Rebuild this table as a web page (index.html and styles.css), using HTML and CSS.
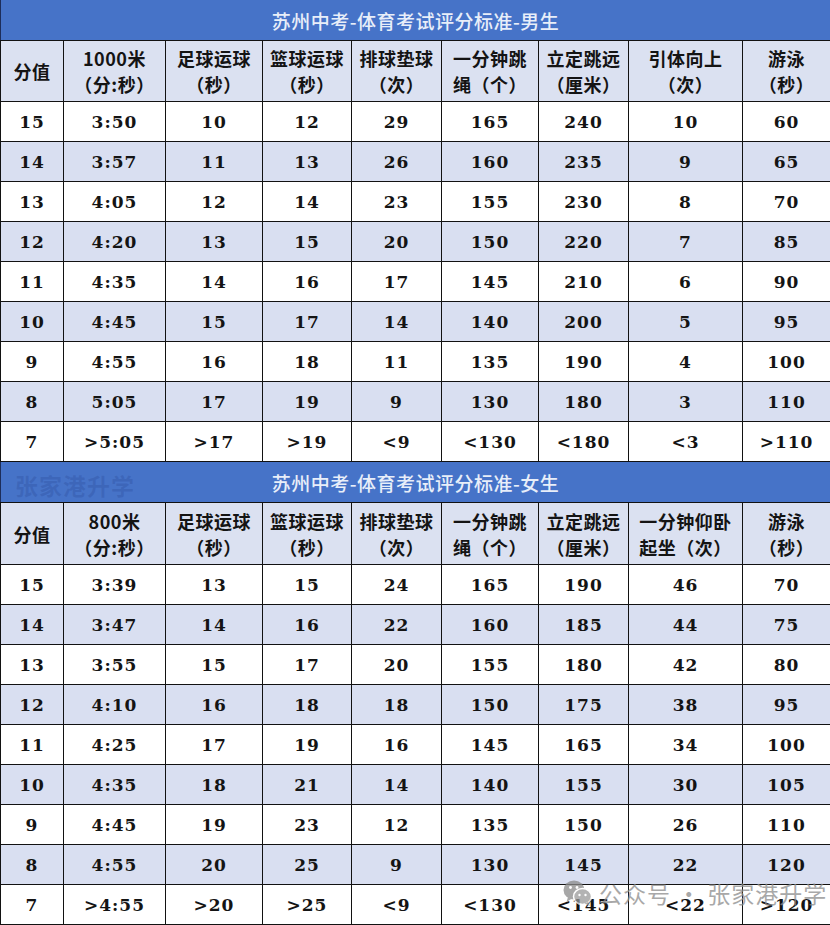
FILE: index.html
```html
<!DOCTYPE html>
<html lang="zh">
<head>
<meta charset="utf-8">
<link rel="stylesheet" href="styles.css">
</head>
<body>
<div class="page">
<table class="score">
<colgroup>
<col class="c1"><col class="c2"><col class="c3"><col class="c4"><col class="c5"><col class="c6"><col class="c7"><col class="c8"><col class="c9">
</colgroup>
<tr class="title"><td colspan="9">苏州中考-体育考试评分标准-男生</td></tr>
<tr class="head">
<td>分值</td><td>1000米<br>（分:秒）</td><td>足球运球<br>（秒）</td><td>篮球运球<br>（秒）</td><td>排球垫球<br>（次）</td><td>一分钟跳<br>绳（个）</td><td>立定跳远<br>（厘米）</td><td>引体向上<br>（次）</td><td>游泳<br>（秒）</td>
</tr>
<tr><td>15</td><td>3:50</td><td>10</td><td>12</td><td>29</td><td>165</td><td>240</td><td>10</td><td>60</td></tr>
<tr class="alt"><td>14</td><td>3:57</td><td>11</td><td>13</td><td>26</td><td>160</td><td>235</td><td>9</td><td>65</td></tr>
<tr><td>13</td><td>4:05</td><td>12</td><td>14</td><td>23</td><td>155</td><td>230</td><td>8</td><td>70</td></tr>
<tr class="alt"><td>12</td><td>4:20</td><td>13</td><td>15</td><td>20</td><td>150</td><td>220</td><td>7</td><td>85</td></tr>
<tr><td>11</td><td>4:35</td><td>14</td><td>16</td><td>17</td><td>145</td><td>210</td><td>6</td><td>90</td></tr>
<tr class="alt"><td>10</td><td>4:45</td><td>15</td><td>17</td><td>14</td><td>140</td><td>200</td><td>5</td><td>95</td></tr>
<tr><td>9</td><td>4:55</td><td>16</td><td>18</td><td>11</td><td>135</td><td>190</td><td>4</td><td>100</td></tr>
<tr class="alt"><td>8</td><td>5:05</td><td>17</td><td>19</td><td>9</td><td>130</td><td>180</td><td>3</td><td>110</td></tr>
<tr><td>7</td><td>&gt;5:05</td><td>&gt;17</td><td>&gt;19</td><td>&lt;9</td><td>&lt;130</td><td>&lt;180</td><td>&lt;3</td><td>&gt;110</td></tr>
</table>

<table class="score second">
<colgroup>
<col class="c1"><col class="c2"><col class="c3"><col class="c4"><col class="c5"><col class="c6"><col class="c7"><col class="c8"><col class="c9">
</colgroup>
<tr class="title"><td colspan="9"><span class="wm-title">张家港升学</span>苏州中考-体育考试评分标准-女生</td></tr>
<tr class="head">
<td>分值</td><td>800米<br>（分:秒）</td><td>足球运球<br>（秒）</td><td>篮球运球<br>（秒）</td><td>排球垫球<br>（次）</td><td>一分钟跳<br>绳（个）</td><td>立定跳远<br>（厘米）</td><td>一分钟仰卧<br>起坐（次）</td><td>游泳<br>（秒）</td>
</tr>
<tr><td>15</td><td>3:39</td><td>13</td><td>15</td><td>24</td><td>165</td><td>190</td><td>46</td><td>70</td></tr>
<tr class="alt"><td>14</td><td>3:47</td><td>14</td><td>16</td><td>22</td><td>160</td><td>185</td><td>44</td><td>75</td></tr>
<tr><td>13</td><td>3:55</td><td>15</td><td>17</td><td>20</td><td>155</td><td>180</td><td>42</td><td>80</td></tr>
<tr class="alt"><td>12</td><td>4:10</td><td>16</td><td>18</td><td>18</td><td>150</td><td>175</td><td>38</td><td>95</td></tr>
<tr><td>11</td><td>4:25</td><td>17</td><td>19</td><td>16</td><td>145</td><td>165</td><td>34</td><td>100</td></tr>
<tr class="alt"><td>10</td><td>4:35</td><td>18</td><td>21</td><td>14</td><td>140</td><td>155</td><td>30</td><td>105</td></tr>
<tr><td>9</td><td>4:45</td><td>19</td><td>23</td><td>12</td><td>135</td><td>150</td><td>26</td><td>110</td></tr>
<tr class="alt"><td>8</td><td>4:55</td><td>20</td><td>25</td><td>9</td><td>130</td><td>145</td><td>22</td><td>120</td></tr>
<tr><td>7</td><td>&gt;4:55</td><td>&gt;20</td><td>&gt;25</td><td>&lt;9</td><td>&lt;130</td><td>&lt;145</td><td>&lt;22</td><td>&gt;120</td></tr>
</table>

<div class="wm-bottom">
<svg class="wx" width="30" height="28" viewBox="0 0 30 28">
<ellipse cx="11" cy="11" rx="10.5" ry="9.5" fill="#8a8a8a"/>
<path d="M5 18 L3.5 23 L9 19.5 Z" fill="#8a8a8a"/>
<ellipse cx="19.5" cy="17.5" rx="9" ry="8" fill="#9a9a9a" stroke="#fff" stroke-width="1.5"/>
<path d="M25 23 L27 27 L21.5 24.5 Z" fill="#9a9a9a"/>
<circle cx="7.5" cy="8.5" r="1.4" fill="#fff"/>
<circle cx="14" cy="8.5" r="1.4" fill="#fff"/>
<circle cx="16.5" cy="16" r="1.2" fill="#fff"/>
<circle cx="22.5" cy="16" r="1.2" fill="#fff"/>
</svg>
<span class="wm-text">公众号 · 张家港升学</span>
</div>
</div>
</body>
</html>
```

FILE: styles.css
```css
html, body {
  margin: 0;
  padding: 0;
  background: #ffffff;
}

.page {
  position: relative;
  width: 830px;
}

.score {
  width: 830px;
  table-layout: fixed;
  border-collapse: collapse;
  font-family: "DejaVu Serif", "Noto Sans CJK SC", serif;
  font-weight: 700;
  color: #141414;
}

.c1 { width: 63px; }
.c2 { width: 102px; }
.c3 { width: 97px; }
.c4 { width: 89px; }
.c5 { width: 90px; }
.c6 { width: 97px; }
.c7 { width: 90px; }
.c8 { width: 114px; }
.c9 { width: 88px; }

.score td {
  border: 1.5px solid #121212;
  padding: 0;
  text-align: center;
  vertical-align: middle;
  font-size: 17px;
  letter-spacing: 1px;
  height: 39px;
  white-space: nowrap;
}

.score tr.alt td {
  background: #d9dff1;
}

.score tr.title td {
  position: relative;
  background: #4673c8;
  color: #e8eef9;
  font-family: "Noto Sans CJK SC", sans-serif;
  font-weight: 500;
  font-size: 19px;
  letter-spacing: 0.5px;
  height: 40px;
  border-left: 1px solid #1d2d5a;
  border-right: 1px solid #1d2d5a;
  border-top: 0;
}

.score tr.head td {
  background: #dbe1f1;
  height: 60px;
  font-family: "Noto Sans CJK SC", sans-serif;
  font-weight: 700;
  font-size: 18px;
  line-height: 26px;
  letter-spacing: 0.5px;
}

.second tr.head td {
  height: 61px;
}

.wm-title {
  position: absolute;
  left: 14px;
  top: 6px;
  font-size: 23px;
  font-weight: 700;
  color: rgba(40, 70, 150, 0.28);
  letter-spacing: 1px;
}

.wm-bottom {
  position: absolute;
  left: 563px;
  top: 876px;
  display: flex;
  align-items: center;
  gap: 6px;
  opacity: 0.75;
}

.wm-text {
  font-family: "Noto Sans CJK SC", sans-serif;
  font-size: 23px;
  color: #8c8c8c;
  letter-spacing: 1px;
  white-space: nowrap;
}
```
